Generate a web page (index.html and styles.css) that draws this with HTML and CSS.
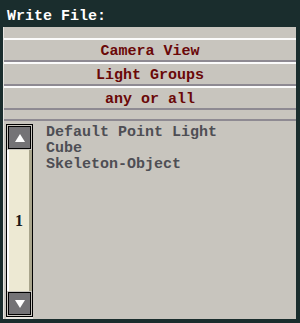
FILE: index.html
```html
<!DOCTYPE html>
<html>
<head>
<meta charset="utf-8">
<link rel="stylesheet" href="styles.css">
</head>
<body>
<div class="title">Write File:</div>
<div class="panel">
  <div class="buttons">
    <div class="btn">Camera View</div>
    <div class="btn">Light Groups</div>
    <div class="btn">any or all</div>
  </div>
  <div class="sep"></div>
  <div class="list">
    <div class="scroll">
      <div class="arrow">
        <svg width="12" height="10" viewBox="0 0 12 10"><polygon points="6,1 11,9 1,9" fill="#ffffff"/></svg>
      </div>
      <div class="track"><span class="num">1</span></div>
      <div class="arrow">
        <svg width="12" height="10" viewBox="0 0 12 10"><polygon points="1,1 11,1 6,9" fill="#ffffff"/></svg>
      </div>
    </div>
    <ul class="items">
      <li>Default Point Light</li>
      <li>Cube</li>
      <li>Skeleton-Object</li>
    </ul>
  </div>
</div>
</body>
</html>
```
FILE: styles.css
```css
html, body {
  margin: 0;
  padding: 0;
}
body {
  width: 300px;
  height: 323px;
  background: #1a2d2d;
  overflow: hidden;
  font-family: "Liberation Mono", "DejaVu Sans Mono", monospace;
  font-size: 15px;
  font-weight: bold;
}
.title {
  height: 27px;
  box-sizing: border-box;
  padding: 9px 0 0 7px;
  line-height: 16px;
  color: #ffffff;
}
.panel {
  margin-left: 3px;
  width: 293px;
  height: 292px;
  box-sizing: border-box;
  padding-top: 11px;
  border-left: 1px solid #e6e4e0;
  background: #c8c5be;
  display: flex;
  flex-direction: column;
}
.buttons {
  display: flex;
  flex-direction: column;
}
.btn {
  height: 24px;
  box-sizing: border-box;
  padding-top: 3px;
  border-top: 2px solid #fbfbfb;
  border-bottom: 2px solid #8e8a92;
  display: flex;
  align-items: center;
  justify-content: center;
  color: #6a0808;
  line-height: 16px;
}
.sep {
  height: 11px;
  box-sizing: border-box;
  border-bottom: 2px solid #8e8a92;
}
.list {
  flex: 1;
  display: flex;
  align-items: flex-start;
}
.scroll {
  margin: 3px 0 0 2px;
  width: 27px;
  height: 193px;
  box-sizing: border-box;
  border: 1px solid #000;
  display: flex;
  flex-direction: column;
  box-shadow: 0 2px 0 #e8e6e0;
}
.arrow {
  margin: 1px;
  height: 23px;
  box-sizing: border-box;
  border: 1px solid #000;
  background: #747376;
  display: flex;
  align-items: center;
  justify-content: center;
}
.track {
  flex: 1;
  background: #ede9d3;
  border-left: 2px solid #ffffff;
  border-right: 3px solid #a9a58c;
  display: flex;
  align-items: center;
  justify-content: center;
}
.num {
  font-family: "Liberation Serif", serif;
  font-size: 16px;
  font-weight: bold;
  color: #1a1a1a;
}
.items {
  list-style: none;
  margin: 0 0 0 13px;
  padding: 4px 0 0 0;
  color: #4e4e54;
  line-height: 16px;
}
```
